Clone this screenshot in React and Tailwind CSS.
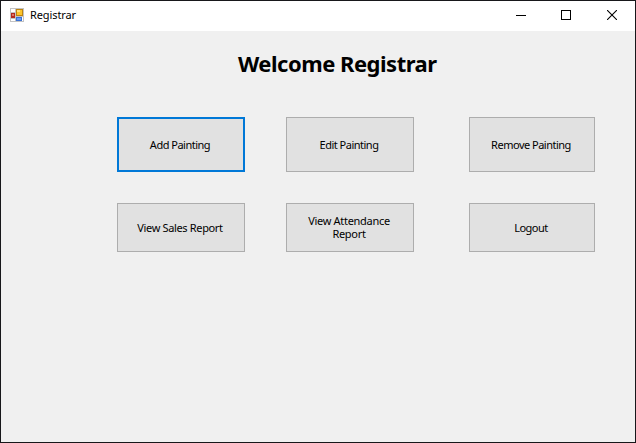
import React from "react";

function AppIcon() {
  return (
    <svg className="h-[14px] w-[14px]" viewBox="0 0 14 14" shapeRendering="crispEdges">
      <rect width="14" height="14" fill="#c3c3c3" />
      <rect x="1" y="1" width="4" height="3" fill="#fff" />
      <rect x="1" y="11" width="4" height="2" fill="#fff" />
      <rect x="12" y="9" width="1" height="4" fill="#fff" />
      <rect x="1" y="5" width="4" height="5" fill="#b32a1e" />
      <rect x="2" y="6" width="2" height="2" fill="#df7466" />
      <rect x="6" y="1" width="7" height="7" fill="#bd8410" />
      <rect x="7" y="2" width="5" height="5" fill="#fcc52c" />
      <rect x="7" y="2" width="3" height="2" fill="#ffe07a" />
      <rect x="6" y="9" width="6" height="4" fill="#3a71d4" />
      <rect x="7" y="10" width="4" height="2" fill="#6c9df0" />
    </svg>
  );
}

function TitleBar() {
  return (
    <header className="flex h-[30px] items-start bg-white">
      <div className="flex grow items-center pl-[9px] pt-[7px]">
        <AppIcon />
        <span className="ml-[6px] text-[11px] leading-[14px] tracking-[-0.1px]">Registrar</span>
      </div>
      <svg className="mt-[9px] h-[11px] w-[10px]" viewBox="0 0 10 11" shapeRendering="crispEdges">
        <rect y="5" width="10" height="1" />
      </svg>
      <svg className="ml-[35px] mt-[9px] h-[10px] w-[10px]" viewBox="0 0 10 10" fill="none" stroke="#000">
        <rect x=".5" y=".5" width="9" height="9" />
      </svg>
      <svg className="ml-[36px] mr-[18px] mt-[9px] h-[10px] w-[10px]" viewBox="0 0 10 10" fill="none" stroke="#000" strokeWidth="1.1">
        <path d="M0 0L10 10M10 0L0 10" />
      </svg>
    </header>
  );
}

function FormButton({ children, className, focused = false }) {
  return (
    <button
      className={`flex items-center justify-center bg-[#e1e1e1] pr-[2px] text-center text-[11px] leading-[13px] ${
        focused ? "border-2 border-[#0078d7]" : "border border-[#adadad]"
      } ${className}`}
    >
      <span>{children}</span>
    </button>
  );
}

export default function App() {
  return (
    <div className="flex h-[443px] w-[636px] flex-col overflow-hidden border border-[#17171a] bg-[#f0f0f0] font-['Noto_Sans','Open_Sans',sans-serif] text-black">
      <TitleBar />
      <main className="pl-[116px]">
        <h1 className="ml-[121px] mt-[17px] whitespace-nowrap text-[22px] font-bold leading-[30px] tracking-[-0.49px]">
          Welcome Registrar
        </h1>
        <div className="mt-[39px] flex h-[55px]">
          <FormButton focused className="w-[128px] tracking-[-0.5px]">Add Painting</FormButton>
          <FormButton className="ml-[41px] w-[128px] tracking-[-0.5px]">Edit Painting</FormButton>
          <FormButton className="ml-[55px] w-[126px] tracking-[-0.5px]">Remove Painting</FormButton>
        </div>
        <div className="mt-[31px] flex h-[49px]">
          <FormButton className="w-[128px] tracking-[-0.35px]">View Sales Report</FormButton>
          <FormButton className="ml-[41px] w-[128px] pb-[2px] tracking-[-0.3px]">
            View Attendance
            <br />
            Report
          </FormButton>
          <FormButton className="ml-[55px] w-[126px] tracking-[-0.5px]">Logout</FormButton>
        </div>
      </main>
    </div>
  );
}
